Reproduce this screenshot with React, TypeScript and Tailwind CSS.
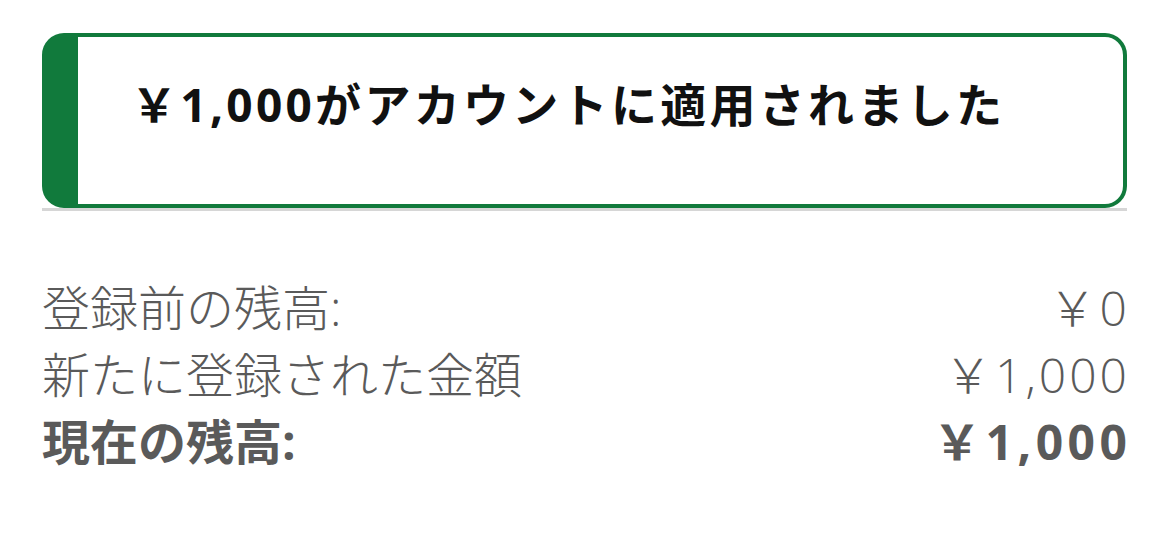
export default function App() {
  const rows = [
    { label: '登録前の残高:', value: '￥0', bold: false },
    { label: '新たに登録された金額', value: '￥1,000', bold: false },
    { label: '現在の残高:', value: '￥1,000', bold: true },
  ]

  return (
    <div
      className="w-[1169px] h-[546px] bg-white px-[42px] pt-[33px]"
      style={{ fontFamily: '"Open Sans", "Noto Sans CJK JP", sans-serif' }}
    >
      {/* Applied banner */}
      <div className="border-b-[3px] border-[#d6d6d6]">
        <div className="h-[175px] rounded-[22px] border-4 border-l-[36px] border-[#117a3c] bg-white pl-[53px] pt-[37px]">
          <p className="text-[46px] leading-[60px] font-bold text-[#111111] tracking-[3.3px]">
            ￥1,000がアカウントに適用されました
          </p>
        </div>
      </div>

      {/* Balance rows */}
      <div className="mt-[63px] flex flex-col text-[#5a5a5a]">
        {rows.map((r) => (
          <div key={r.label} className="flex items-center justify-between h-[67px]">
            <span className={`text-[48px] ${r.bold ? 'font-bold' : 'font-light'}`}>{r.label}</span>
            <span
              className={`text-[48px] ${
                r.bold ? 'font-bold tracking-[4.5px] -mr-[4.5px]' : 'font-light tracking-[3px] -mr-[3px]'
              }`}
            >
              {r.value}
            </span>
          </div>
        ))}
      </div>
    </div>
  )
}
